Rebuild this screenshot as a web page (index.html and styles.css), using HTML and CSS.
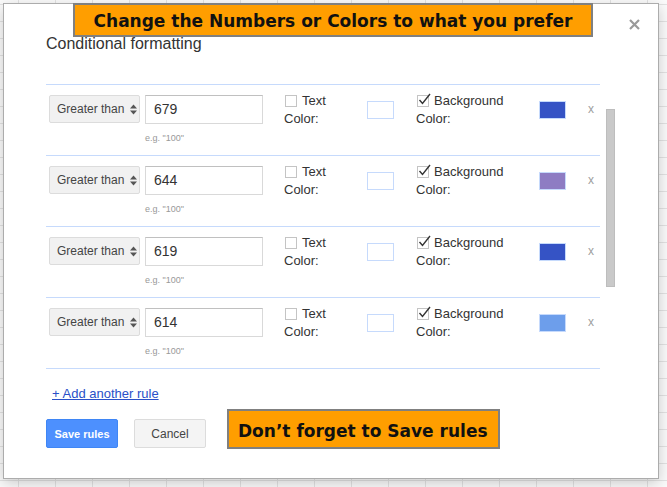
FILE: index.html
```html
<!DOCTYPE html>
<html>
<head>
<meta charset="utf-8">
<title>Conditional formatting</title>
<link rel="stylesheet" href="styles.css">
</head>
<body>
<div class="sheet">
  <div class="dialog">
    <div class="banner banner-top">Change the Numbers or Colors to what you prefer</div>
    <svg class="close" width="11" height="11" viewBox="0 0 11 11"><path d="M1 1L10 10M10 1L1 10" stroke="#9a9a9a" stroke-width="2.2" fill="none"/></svg>
    <div class="title">Conditional formatting</div>
    <div class="rules">
      <div class="rule">
        <div class="cond">Greater than <svg class="arrows" width="7" height="11" viewBox="0 0 7 11"><path d="M0 4.5L3.5 0.5L7 4.5Z M0 6.5L7 6.5L3.5 10.5Z" fill="#555"/></svg></div>
        <div class="value"><div class="input">679</div><div class="hint">e.g. "100"</div></div>
        <div class="label"><div class="line1"><span class="cb"></span>Text</div><div>Color:</div></div>
        <div class="swatch"></div>
        <div class="label label-bg"><div class="line1"><span class="cb"><svg class="tick" width="15" height="14" viewBox="0 0 15 14"><path d="M2.5 8L5.5 11.5L13 2" stroke="#333" stroke-width="1.4" fill="none"/></svg></span>Background</div><div>Color:</div></div>
        <div class="swatch" style="background:#3553c5"></div>
        <div class="remove">x</div>
      </div>
      <div class="rule">
        <div class="cond">Greater than <svg class="arrows" width="7" height="11" viewBox="0 0 7 11"><path d="M0 4.5L3.5 0.5L7 4.5Z M0 6.5L7 6.5L3.5 10.5Z" fill="#555"/></svg></div>
        <div class="value"><div class="input">644</div><div class="hint">e.g. "100"</div></div>
        <div class="label"><div class="line1"><span class="cb"></span>Text</div><div>Color:</div></div>
        <div class="swatch"></div>
        <div class="label label-bg"><div class="line1"><span class="cb"><svg class="tick" width="15" height="14" viewBox="0 0 15 14"><path d="M2.5 8L5.5 11.5L13 2" stroke="#333" stroke-width="1.4" fill="none"/></svg></span>Background</div><div>Color:</div></div>
        <div class="swatch" style="background:#8e7cc3"></div>
        <div class="remove">x</div>
      </div>
      <div class="rule">
        <div class="cond">Greater than <svg class="arrows" width="7" height="11" viewBox="0 0 7 11"><path d="M0 4.5L3.5 0.5L7 4.5Z M0 6.5L7 6.5L3.5 10.5Z" fill="#555"/></svg></div>
        <div class="value"><div class="input">619</div><div class="hint">e.g. "100"</div></div>
        <div class="label"><div class="line1"><span class="cb"></span>Text</div><div>Color:</div></div>
        <div class="swatch"></div>
        <div class="label label-bg"><div class="line1"><span class="cb"><svg class="tick" width="15" height="14" viewBox="0 0 15 14"><path d="M2.5 8L5.5 11.5L13 2" stroke="#333" stroke-width="1.4" fill="none"/></svg></span>Background</div><div>Color:</div></div>
        <div class="swatch" style="background:#3553c5"></div>
        <div class="remove">x</div>
      </div>
      <div class="rule">
        <div class="cond">Greater than <svg class="arrows" width="7" height="11" viewBox="0 0 7 11"><path d="M0 4.5L3.5 0.5L7 4.5Z M0 6.5L7 6.5L3.5 10.5Z" fill="#555"/></svg></div>
        <div class="value"><div class="input">614</div><div class="hint">e.g. "100"</div></div>
        <div class="label"><div class="line1"><span class="cb"></span>Text</div><div>Color:</div></div>
        <div class="swatch"></div>
        <div class="label label-bg"><div class="line1"><span class="cb"><svg class="tick" width="15" height="14" viewBox="0 0 15 14"><path d="M2.5 8L5.5 11.5L13 2" stroke="#333" stroke-width="1.4" fill="none"/></svg></span>Background</div><div>Color:</div></div>
        <div class="swatch" style="background:#6d9eeb"></div>
        <div class="remove">x</div>
      </div>
    </div>
    <div class="scrollbar"></div>
    <a class="add" href="#">+ Add another rule</a>
    <div class="actions">
      <button class="btn btn-save">Save rules</button>
      <button class="btn btn-cancel">Cancel</button>
    </div>
    <div class="banner banner-bottom">Don’t forget to Save rules</div>
  </div>
</div>
</body>
</html>
```

FILE: styles.css
```css
html, body {
  margin: 0;
  padding: 0;
}
body {
  font-family: "Liberation Sans", Arial, sans-serif;
  color: #333;
}
.sheet {
  width: 667px;
  height: 487px;
  overflow: hidden;
  box-sizing: border-box;
  padding: 3px 0 0 3px;
  background-color: #fbfbfb;
  background-image:
    linear-gradient(#e3e3e3 1px, transparent 1px),
    linear-gradient(90deg, #e3e3e3 1px, transparent 1px);
  background-size: 37px 17px;
  background-position: 18px 4px;
}
.dialog {
  position: relative;
  width: 656px;
  height: 476px;
  box-sizing: border-box;
  border: 1px solid #acacac;
  background: #fff;
  box-shadow: 0 4px 14px rgba(0, 0, 0, 0.2);
  padding: 31px 0 0 42px;
}
.title {
  font-size: 16px;
  line-height: 18px;
  color: #333;
  margin-bottom: 31px;
}
.rules {
  width: 554px;
  border-top: 1px solid #c6dafc;
}
.rule {
  display: flex;
  align-items: flex-start;
  height: 70px;
  border-bottom: 1px solid #c6dafc;
}
.cond {
  margin: 10px 0 0 3px;
  width: 91px;
  height: 28px;
  box-sizing: border-box;
  border: 1px solid #dcdcdc;
  border-radius: 2px;
  background: #f1f1f1;
  display: flex;
  align-items: center;
  padding-left: 7px;
  font-size: 12px;
  color: #444;
  white-space: pre;
}
.arrows {
  margin-left: 2px;
}
.value {
  margin: 10px 0 0 5px;
  width: 118px;
}
.input {
  height: 29px;
  box-sizing: border-box;
  border: 1px solid #d9d9d9;
  border-top-color: #c0c0c0;
  padding-left: 8px;
  font-size: 14px;
  line-height: 27px;
  color: #333;
}
.hint {
  margin-top: 9px;
  font-size: 9px;
  line-height: 11px;
  color: #999;
}
.label {
  margin: 7px 0 0 21px;
  width: 83px;
  font-size: 13px;
  line-height: 18px;
  color: #333;
}
.label-bg {
  margin-left: 22px;
  width: 123px;
}
.line1 {
  display: flex;
  align-items: center;
  padding-left: 1px;
}
.cb {
  position: relative;
  width: 12px;
  height: 12px;
  box-sizing: border-box;
  border: 1px solid #c4c4c4;
  margin-right: 5px;
  margin-top: -1px;
}
.tick {
  position: absolute;
  left: -1px;
  top: -4px;
}
.swatch {
  margin-top: 16px;
  width: 27px;
  height: 18px;
  box-sizing: border-box;
  border: 1px solid #c6dafc;
  background: #fff;
}
.remove {
  margin: 17px 0 0 22px;
  font-size: 12px;
  line-height: 14px;
  color: #9e9e9e;
}
.scrollbar {
  position: absolute;
  left: 602px;
  top: 105px;
  width: 9px;
  height: 178px;
  box-sizing: border-box;
  background: #c9c9c9;
  border: 1px solid #bdbdbd;
}
.add {
  display: inline-block;
  margin: 17px 0 0 6px;
  font-size: 13px;
  line-height: 16px;
  color: #2a50c8;
  text-decoration: underline;
}
.actions {
  display: flex;
  gap: 16px;
  margin-top: 17px;
}
.btn {
  width: 72px;
  height: 29px;
  box-sizing: border-box;
  border-radius: 2px;
  font-family: "Liberation Sans", Arial, sans-serif;
  font-size: 11px;
  padding: 0;
}
.btn-save {
  background: #4d90fe;
  border: 1px solid #3f86f5;
  color: #fff;
  font-weight: bold;
}
.btn-cancel {
  background: #f4f4f4;
  border: 1px solid #dcdcdc;
  color: #444;
  font-size: 12px;
}
.close {
  position: absolute;
  left: 625px;
  top: 15px;
}
.banner {
  position: absolute;
  box-sizing: border-box;
  border: 2px solid #808080;
  background: #ff9e00;
  color: #111;
  font-family: "DejaVu Sans", Verdana, sans-serif;
  font-weight: bold;
  font-size: 17px;
  white-space: nowrap;
}
.banner-top {
  left: 69px;
  top: -1px;
  width: 520px;
  height: 34px;
  line-height: 33px;
  text-align: center;
}
.banner-bottom {
  left: 223px;
  top: 405px;
  width: 273px;
  height: 40px;
  line-height: 41px;
  padding-left: 9px;
}
```
